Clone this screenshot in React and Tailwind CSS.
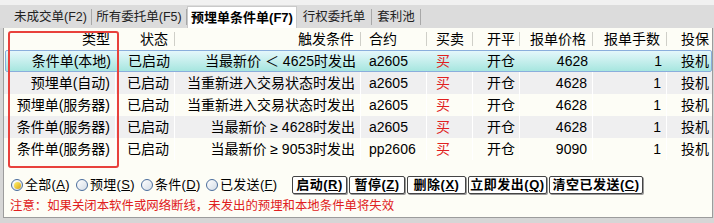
import React from "react";

const F = { fontFamily: '"Liberation Sans", "Noto Sans CJK SC", sans-serif' };

const cols = [
  { w: 112, align: "right" },
  { w: 59, align: "right" },
  { w: 186, align: "right" },
  { w: 66, align: "left", pl: 8 },
  { w: 46, align: "left", pl: 9 },
  { w: 47, align: "left", pl: 14 },
  { w: 73, align: "right" },
  { w: 74, align: "right" },
  { w: 45, align: "left", pl: 14 },
];

const headers = ["类型", "状态", "触发条件", "合约", "买卖", "开平", "报单价格", "报单手数", "投保"];

const rows = [
  ["条件单(本地)", "已启动", "当最新价 ＜ 4625时发出", "a2605", "买", "开仓", "4628", "1", "投机"],
  ["预埋单(自动)", "已启动", "当重新进入交易状态时发出", "a2605", "买", "开仓", "4628", "1", "投机"],
  ["预埋单(服务器)", "已启动", "当重新进入交易状态时发出", "a2605", "买", "开仓", "4628", "1", "投机"],
  ["条件单(服务器)", "已启动", "当最新价 ≥ 4628时发出", "a2605", "买", "开仓", "4628", "1", "投机"],
  ["条件单(服务器)", "已启动", "当最新价 ≥ 9053时发出", "pp2606", "买", "开仓", "9090", "1", "投机"],
];

function Tab({ children, active, sep = true, w }) {
  if (active) {
    return (
      <div
        className="h-[22px] flex items-center justify-center bg-white border border-b-0 border-[#c9c9c9] font-bold text-[13px] text-black shrink-0"
        style={{ width: w }}
      >
        {children}
      </div>
    );
  }
  return (
    <div className="h-[22px] flex items-center shrink-0" style={{ width: w }}>
      <div className="flex-1 text-center text-[12.5px] text-[#222] whitespace-nowrap">{children}</div>
      {sep && <div className="w-px h-[16px] bg-[#a8a8a8]" />}
    </div>
  );
}

function Radio({ checked, label, k, w }) {
  return (
    <div className="flex items-center shrink-0" style={{ width: w }}>
      <div className="w-[12px] h-[12px] rounded-full border border-[#4a6d9c] bg-gradient-to-br from-white to-[#d4dce6] flex items-center justify-center">
        {checked && <div className="w-[7px] h-[7px] rounded-full bg-gradient-to-br from-[#fff36a] to-[#d9a400]" />}
      </div>
      <span className="ml-[2px] text-[13px] text-black tracking-[0.3px]">
        {label}(<span className="underline">{k}</span>)
      </span>
    </div>
  );
}

function Btn({ label, k, w }) {
  return (
    <div
      className="h-[18px] flex items-center justify-center bg-white border border-[#444] rounded-[2px] shadow-[1px_1px_0_#9a9a9a] text-[13px] font-bold text-black mr-[2px] shrink-0 tracking-[0.5px]"
      style={{ width: w }}
    >
      {label}(<span className="underline">{k}</span>)
    </div>
  );
}

export default function App() {
  return (
    <div className="w-[714px] h-[223px] bg-[#d6d6d6] relative overflow-hidden" style={F}>
      <div className="h-[5px] bg-[#f1f1f1]" />
      <div className="h-[23px] bg-[#dcdcdc] flex items-end pl-[10px]">
        <Tab w={82}>未成交单(F2)</Tab>
        <Tab w={95}>所有委托单(F5)</Tab>
        <Tab w={110} active>预埋单条件单(F7)</Tab>
        <Tab w={75}>行权委托单</Tab>
        <Tab w={49}>套利池</Tab>
      </div>
      <div className="ml-[3px] mr-[1px] h-[190px] border border-t-0 border-[#9c9c9c] bg-[#fdfdf6] flex flex-col">
        <div className="h-[22px] flex text-[14px] text-black">
          {headers.map((h, i) => {
            const c = cols[i];
            return (
              <div key={i} className={"h-full flex items-center shrink-0 " + (i === 8 ? "flex-1" : "")} style={{ width: i === 8 ? undefined : c.w }}>
                {c.align === "right" ? (
                  <div className="flex-1 text-right pr-[6px]">{h}</div>
                ) : (
                  <div className="flex-1 text-left" style={{ paddingLeft: c.pl }}>{h}</div>
                )}
                {i !== 0 && i !== 8 && <div className="w-px h-[14px] bg-[#cfcfc8]" />}
              </div>
            );
          })}
        </div>
        {rows.map((r, ri) => {
          const sel = ri === 0;
          const bg = sel
            ? "bg-gradient-to-b from-[#e4f7fb] to-[#a6e6df] border border-[#8aaedc] rounded-[2px] ml-[1px]"
            : ri % 2 === 1
            ? "bg-[#efeff0]"
            : "bg-[#fdfdf6]";
          return (
            <div key={ri} className={"h-[22px] flex text-[14px] text-black " + bg}>
              {r.map((v, i) => {
                const c = cols[i];
                const w = sel && i === 0 ? c.w - 2 : c.w;
                return (
                  <div
                    key={i}
                    className={
                      "h-full flex items-center shrink-0 " +
                      (i === 8 ? "flex-1 " : "") +
                      (!sel && i !== 8 ? "border-r border-white " : "") +
                      (i === 4 ? "text-[#e02020] " : "")
                    }
                    style={{ width: i === 8 ? undefined : w }}
                  >
                    <div
                      className={"flex-1 whitespace-nowrap " + (c.align === "right" ? "text-right pr-[5px]" : "text-left")}
                      style={c.align === "left" ? { paddingLeft: c.pl } : undefined}
                    >
                      {v}
                    </div>
                  </div>
                );
              })}
            </div>
          );
        })}
        <div className="flex-1" />
        <div className="flex items-center pl-[7px] h-[20px]">
          <Radio w={65} checked label="全部" k="A" />
          <Radio w={65} label="预埋" k="S" />
          <Radio w={65} label="条件" k="D" />
          <Radio w={86} label="已发送" k="F" />
          <Btn w={55} label="启动" k="R" />
          <Btn w={56} label="暂停" k="Z" />
          <Btn w={59} label="删除" k="X" />
          <Btn w={79} label="立即发出" k="Q" />
          <Btn w={94} label="清空已发送" k="C" />
        </div>
        <div className="h-[22px] flex items-center pl-[6px] text-[12.4px] text-[#e02020]">
          注意：如果关闭本软件或网络断线，未发出的预埋和本地条件单将失效
        </div>
      </div>
      <div className="absolute left-[8px] top-[31px] w-[111px] h-[137px] border-2 border-[#e8413c] rounded-[3px]" />
    </div>
  );
}
